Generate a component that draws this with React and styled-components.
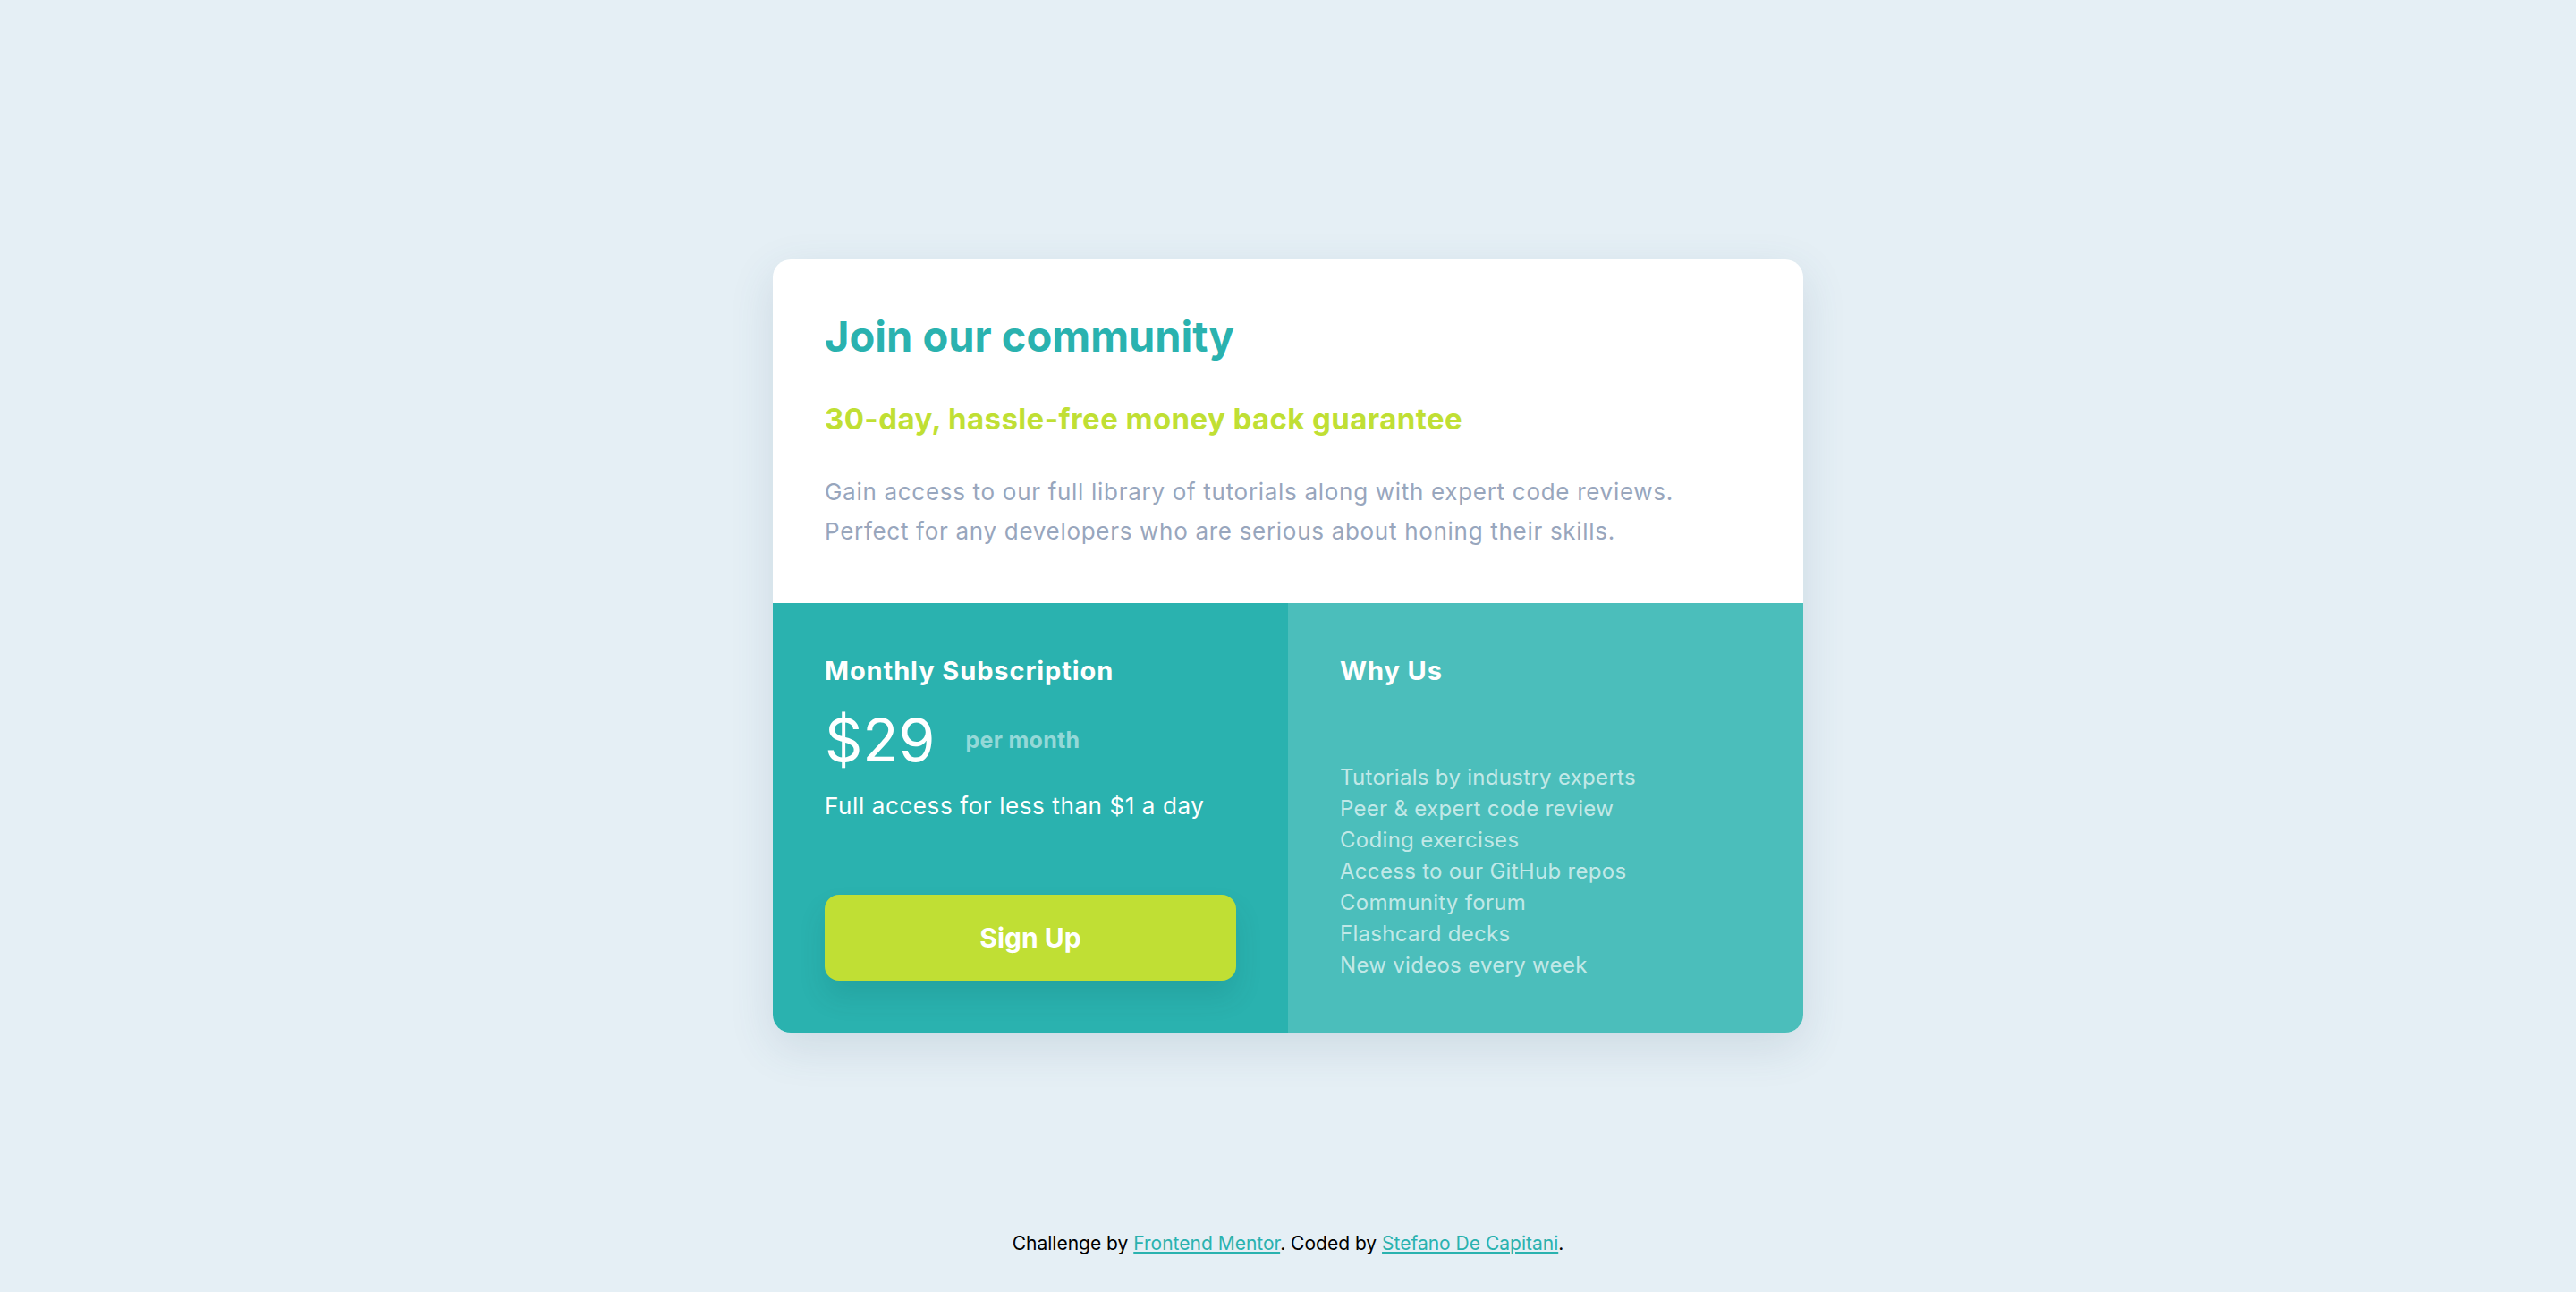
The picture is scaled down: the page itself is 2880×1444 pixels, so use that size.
import React from "react";
import styled, { createGlobalStyle } from "styled-components";

const cyan = "hsl(179, 62%, 43%)";
const cyanLight = "#4bbebb";
const yellow = "hsl(71, 73%, 54%)";
const lightGray = "hsl(204, 43%, 93%)";
const grayBlue = "hsl(218, 22%, 67%)";

const GlobalStyle = createGlobalStyle`
  * { box-sizing: border-box; }
  html, body { margin: 0; padding: 0; }
  body {
    background: ${lightGray};
    font-family: Inter, "Liberation Sans", sans-serif;
  }
`;

const Page = styled.div`
  min-height: 100vh;
  display: grid;
  grid-template-rows: 1fr auto 1fr;
  justify-items: center;
`;

const Card = styled.main`
  grid-row: 2;
  width: 1152px;
  background: #fff;
  border-radius: 20px;
  overflow: hidden;
  box-shadow: 0 16px 50px rgba(60, 90, 120, 0.14);
`;

const Top = styled.section`
  padding: 58px;
`;

const Title = styled.h1`
  margin: 0;
  font-size: 47px;
  line-height: 56px;
  font-weight: 700;
  color: ${cyan};
`;

const Subtitle = styled.h2`
  margin: 44px 0 0;
  font-size: 33px;
  line-height: 40px;
  letter-spacing: 0.4px;
  font-weight: 700;
  color: ${yellow};
`;

const Body = styled.p`
  margin: 40px 0 0;
  font-size: 26px;
  line-height: 44px;
  letter-spacing: 0.7px;
  color: ${grayBlue};
`;

const Bottom = styled.div`
  display: grid;
  grid-template-columns: 1fr 1fr;
`;

const Column = styled.section`
  padding: 58px;
  background: ${(p) => (p.$light ? cyanLight : cyan)};
  color: #fff;
  display: flex;
  flex-direction: column;
  justify-content: ${(p) => (p.$light ? "space-between" : "flex-start")};
`;

const ColTitle = styled.h3`
  margin: 0;
  font-size: 29px;
  line-height: 36px;
  letter-spacing: 0.9px;
  font-weight: 700;
  color: #fff;
`;

const PriceRow = styled.div`
  display: flex;
  align-items: center;
  gap: 34px;
  margin-top: 27px;
`;

const Price = styled.span`
  font-size: 66px;
  line-height: 64px;
  font-weight: 400;
  color: #fff;
`;

const Per = styled.span`
  font-size: 25px;
  letter-spacing: 0.3px;
  font-weight: 700;
  color: rgba(255, 255, 255, 0.5);
`;

const Note = styled.p`
  margin: 24px 0 0;
  font-size: 26px;
  line-height: 36px;
  letter-spacing: 0.6px;
  color: #fff;
`;

const Button = styled.button`
  margin-top: 81px;
  width: 100%;
  height: 96px;
  border: none;
  border-radius: 16px;
  background: ${yellow};
  color: #fff;
  font-family: inherit;
  font-size: 30px;
  font-weight: 700;
  cursor: pointer;
  box-shadow: 0 18px 30px rgba(0, 70, 70, 0.13);
`;

const List = styled.ul`
  margin: 0;
  padding: 0;
  list-style: none;
`;

const Item = styled.li`
  font-size: 24px;
  line-height: 35px;
  letter-spacing: 0.3px;
  color: rgba(255, 255, 255, 0.68);
`;

const Footer = styled.footer`
  grid-row: 3;
  align-self: end;
  padding-bottom: 42px;
  font-size: 21px;
  line-height: 24px;
  color: #000;
  text-align: center;
`;

const Link = styled.a`
  color: ${cyan};
  text-decoration: underline;
`;

const features = [
  "Tutorials by industry experts",
  "Peer & expert code review",
  "Coding exercises",
  "Access to our GitHub repos",
  "Community forum",
  "Flashcard decks",
  "New videos every week",
];

export default function App() {
  return (
    <>
      <GlobalStyle />
      <Page>
        <Card>
          <Top>
            <Title>Join our community</Title>
            <Subtitle>30-day, hassle-free money back guarantee</Subtitle>
            <Body>
              Gain access to our full library of tutorials along with expert code reviews.
              <br />
              Perfect for any developers who are serious about honing their skills.
            </Body>
          </Top>
          <Bottom>
            <Column>
              <ColTitle>Monthly Subscription</ColTitle>
              <PriceRow>
                <Price>$29</Price>
                <Per>per month</Per>
              </PriceRow>
              <Note>Full access for less than $1 a day</Note>
              <Button>Sign Up</Button>
            </Column>
            <Column $light>
              <ColTitle>Why Us</ColTitle>
              <List>
                {features.map((f) => (
                  <Item key={f}>{f}</Item>
                ))}
              </List>
            </Column>
          </Bottom>
        </Card>
        <Footer>
          Challenge by <Link href="#">Frontend Mentor</Link>. Coded by{" "}
          <Link href="#">Stefano De Capitani</Link>.
        </Footer>
      </Page>
    </>
  );
}
